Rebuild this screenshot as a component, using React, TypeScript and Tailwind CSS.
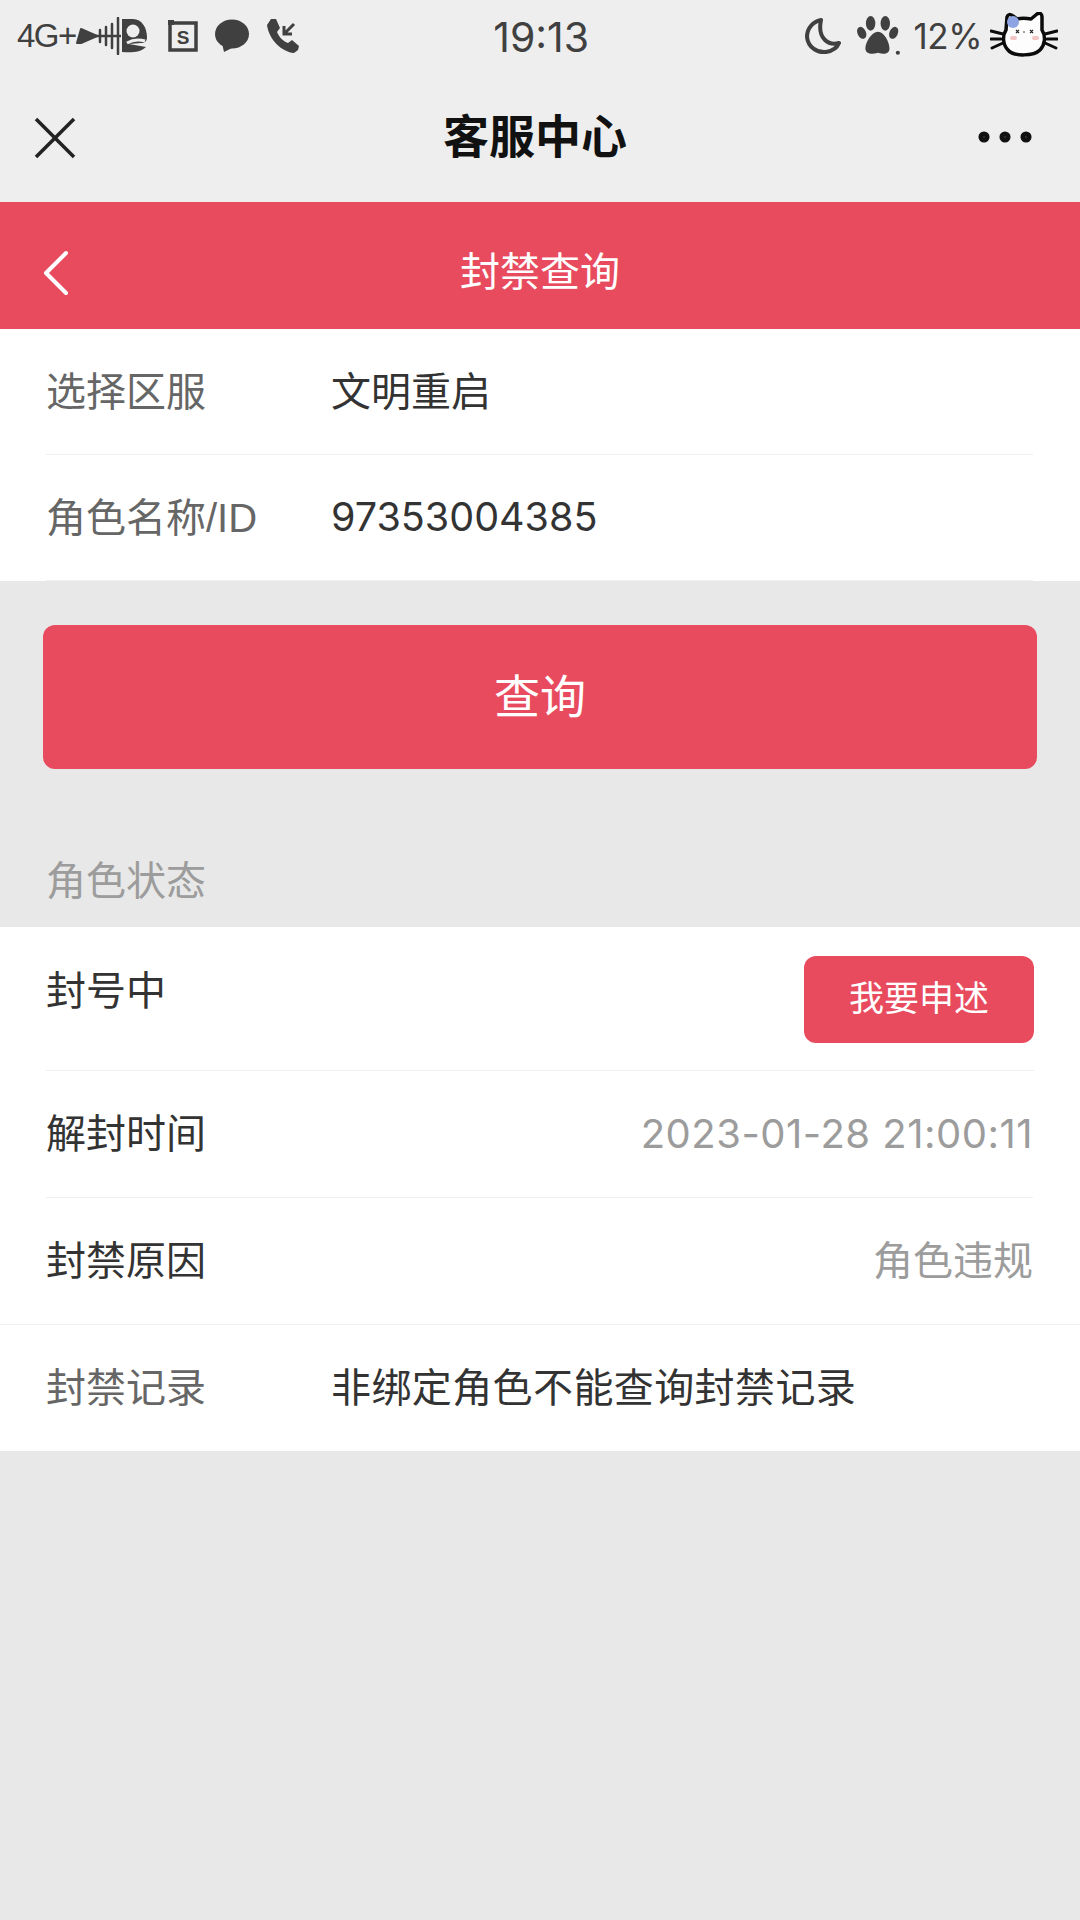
import { X, ChevronLeft, MoreHorizontal } from "lucide-react"

const cjk = "font-['Liberation_Sans','Noto_Sans_CJK_SC',sans-serif]"

function FishIcon() {
    return (
        <svg width="72" height="38" viewBox="0 0 72 38" className="shrink-0">
            <path d="M2 26 L6 12 L22 19 L6 26 Z" fill="#404040" stroke="#404040" strokeWidth="2" strokeLinejoin="round" />
            <path d="M18 19 H46" stroke="#404040" strokeWidth="2.5" />
            <path d="M25 13 V25 M31 10 V28 M37 7 V31 M43 1 V37" stroke="#404040" strokeWidth="2.5" strokeLinecap="round" />
            <path d="M47 2 H58 C67 2 72 11 72 20 C72 24 70 26 66 26 L54 27 L71 30 C66 35 57 36 47 35 Z" fill="#404040" />
            <circle cx="58" cy="14" r="6.5" fill="#eeeeee" />
            <path d="M52 26 C57 23 63 22 70 24" stroke="#eeeeee" strokeWidth="3" fill="none" />
        </svg>
    )
}

function SimIcon() {
    return (
        <svg width="32" height="34" viewBox="0 0 32 34" className="shrink-0">
            <rect x="3" y="4" width="26" height="27" fill="none" stroke="#404040" strokeWidth="3.5" />
            <rect x="1" y="1" width="6" height="5" fill="#404040" />
            <text x="16" y="25" textAnchor="middle" fontSize="19" fontWeight="700" fill="#404040" fontFamily="Liberation Sans">S</text>
        </svg>
    )
}

function ChatIcon() {
    return (
        <svg width="36" height="34" viewBox="0 0 36 34" className="shrink-0">
            <ellipse cx="18" cy="15" rx="17" ry="14.5" fill="#404040" />
            <path d="M8 24 L10 33 L20 28 Z" fill="#404040" />
        </svg>
    )
}

function PhoneIcon() {
    return (
        <svg width="34" height="36" viewBox="0 0 34 36" className="shrink-0">
            <path d="M5 1 L10 1 L14 10 L11 14 C13 19 17 23 22 25 L26 22 L33 28 L32 32 L28 35 C16 34 3 22 1 7 Z" fill="#404040" />
            <path d="M28 6 L19 15 M18 8 V16 H26" stroke="#404040" strokeWidth="3" fill="none" />
        </svg>
    )
}

function MoonIcon() {
    return (
        <svg width="36" height="38" viewBox="0 0 36 38" className="shrink-0">
            <path d="M16 3 C7 5 2 12 2 20 C3 30 12 36 21 35 C27 34 32 31 34 26 C24 29 12 22 16 3 Z" fill="none" stroke="#404040" strokeWidth="4" strokeLinejoin="round" />
        </svg>
    )
}

function PawIcon() {
    return (
        <svg width="44" height="40" viewBox="0 0 42 38" className="shrink-0">
            <ellipse cx="4.5" cy="16" rx="4" ry="6" transform="rotate(-25 4.5 16)" fill="#404040" />
            <ellipse cx="13" cy="7" rx="4.5" ry="7" fill="#404040" />
            <ellipse cx="27" cy="7" rx="4.5" ry="7" fill="#404040" />
            <ellipse cx="35" cy="16" rx="4" ry="6" transform="rotate(25 35 16)" fill="#404040" />
            <path d="M20 15 C26 15 31 25 31 31 C31 36 26 37 20 35 C14 37 8 36 8 31 C8 25 14 15 20 15 Z" fill="#404040" />
            <circle cx="39" cy="35" r="2" fill="#404040" />
        </svg>
    )
}

function CatIcon() {
    return (
        <svg width="68" height="48" viewBox="0 0 68 48" className="shrink-0">
            <path d="M16 18 L17 5 C18 2 20 2 23 4 L27 7 C31 6 36 6 41 7 L47 2 C50 0 52 2 52 5 L52 18 C56 24 55 33 50 38 C44 44 24 45 18 38 C13 33 12 24 16 18 Z" fill="#fdfdfd" stroke="#0b0b0b" strokeWidth="3.5" strokeLinejoin="round" />
            <circle cx="23" cy="10" r="6" fill="#8fa5e3" />
            <path d="M1 19 L13 22 M1 27 L11 27 M2 36 L13 31 M67 19 L55 22 M67 27 L57 27 M66 36 L55 31" stroke="#0b0b0b" strokeWidth="3" strokeLinecap="round" />
            <path d="M26 18 l3 3 m0 -3 l-3 3 M40 18 l3 3 m0 -3 l-3 3" stroke="#222" strokeWidth="1.2" />
            <path d="M33 20 h2" stroke="#444" strokeWidth="1" />
            <rect x="20" y="24" width="7" height="4" rx="2" fill="#f4c4c4" />
            <rect x="42" y="24" width="7" height="4" rx="2" fill="#f4c4c4" />
        </svg>
    )
}

function StatusBar() {
    return (
        <div className="h-[72px] pt-[12px] pl-[17px] pr-[22px] flex items-start relative">
            <div className="flex items-center h-[48px]">
                <span className="text-[33px] text-[#404040] font-['Liberation_Sans',sans-serif] tracking-[-1.5px] mr-[-1px]">4G+</span>
                <FishIcon />
                <div className="w-[20px]" />
                <SimIcon />
                <div className="w-[15px]" />
                <ChatIcon />
                <div className="w-[16px]" />
                <PhoneIcon />
            </div>
            <div className="flex-1 flex justify-center h-[48px] items-center pr-[22px] pt-[4px]">
                <span className="text-[41px] text-[#404040] font-['Inter',sans-serif]">19:13</span>
            </div>
            <div className="flex items-center h-[48px]">
                <MoonIcon />
                <div className="w-[16px]" />
                <PawIcon />
                <div className="w-[13px]" />
                <span className="text-[35px] text-[#404040] font-['Inter',sans-serif] tracking-[-0.5px]">12%</span>
                <div className="w-[8px]" />
                <CatIcon />
            </div>
        </div>
    )
}

function Row({ label, labelClass, children, border = true, full = false }: { label: string; labelClass: string; children?: React.ReactNode; border?: boolean; full?: boolean }) {
    return (
        <div className={`flex items-center ${full ? "h-[126px] pl-[46px]" : "h-[126px] ml-[46px] mr-[47px]"} ${border ? "border-b border-[#efefef]" : ""}`}>
            <div className={`w-[285px] text-[40px] ${labelClass}`}>{label}</div>
            {children}
        </div>
    )
}

export default function App() {
    return (
        <div className={`w-[1080px] h-[1920px] bg-[#e8e8e8] flex flex-col overflow-hidden ${cjk}`}>
            <div className="bg-[#eeeeee] h-[202px] flex flex-col">
                <StatusBar />
                <div className="h-[130px] relative flex items-center justify-center">
                    <X className="absolute left-[17px] top-[28px] w-[76px] h-[76px] text-[#222]" strokeWidth={1.1} strokeLinecap="butt" />
                    <span className="text-[46px] font-bold text-[#111] mr-[10px]">客服中心</span>
                    <MoreHorizontal className="absolute right-[39px] top-[29px] w-[72px] h-[72px] text-[#111]" strokeWidth={1.7} />
                </div>
            </div>

            <div className="bg-[#e84b5e] h-[127px] relative flex items-center justify-center pt-[12px]">
                <ChevronLeft className="absolute left-[16px] top-[31px] w-[80px] h-[80px] text-white" strokeWidth={1.2} />
                <span className="text-[40px] text-white">封禁查询</span>
            </div>

            <div className="bg-white">
                <Row label="选择区服" labelClass="text-[#666]">
                    <span className="text-[40px] text-[#333]">文明重启</span>
                </Row>
                <Row label="角色名称/ID" labelClass="text-[#666]">
                    <span className="text-[39.5px] text-[#333] font-['Inter',sans-serif]">97353004385</span>
                </Row>
            </div>

            <div className="px-[43px] pt-[44px]">
                <div className="h-[144px] rounded-[12px] bg-[#e84b5e] flex items-center justify-center text-[46px] text-white">查询</div>
            </div>

            <div className="h-[158px] pl-[46px] flex items-end pb-[16px] text-[40px] text-[#9c9c9c]">角色状态</div>

            <div className="bg-white">
                <div className="h-[144px] ml-[46px] mr-[46px] flex justify-between border-b border-[#efefef]">
                    <span className="text-[40px] text-[#333] mt-[36px] leading-[56px]">封号中</span>
                    <div className="mt-[29px] w-[230px] h-[87px] rounded-[12px] bg-[#e84b5e] flex items-center justify-center text-[35px] text-white">我要申述</div>
                </div>
                <div className="h-[127px] ml-[46px] mr-[47px] flex items-center justify-between border-b border-[#efefef]">
                    <span className="text-[40px] text-[#333]">解封时间</span>
                    <span className="text-[40px] text-[#9c9c9c] font-['Inter',sans-serif] tracking-[0.5px]">2023-01-28 21:00:11</span>
                </div>
                <div className="h-[127px] pl-[46px] pr-[47px] flex items-center justify-between border-b border-[#efefef]">
                    <span className="text-[40px] text-[#333]">封禁原因</span>
                    <span className="text-[40px] text-[#9c9c9c]">角色违规</span>
                </div>
                <Row label="封禁记录" labelClass="text-[#666]" border={false} full>
                    <span className="text-[40px] text-[#333] tracking-[0.4px]">非绑定角色不能查询封禁记录</span>
                </Row>
            </div>
        </div>
    )
}
